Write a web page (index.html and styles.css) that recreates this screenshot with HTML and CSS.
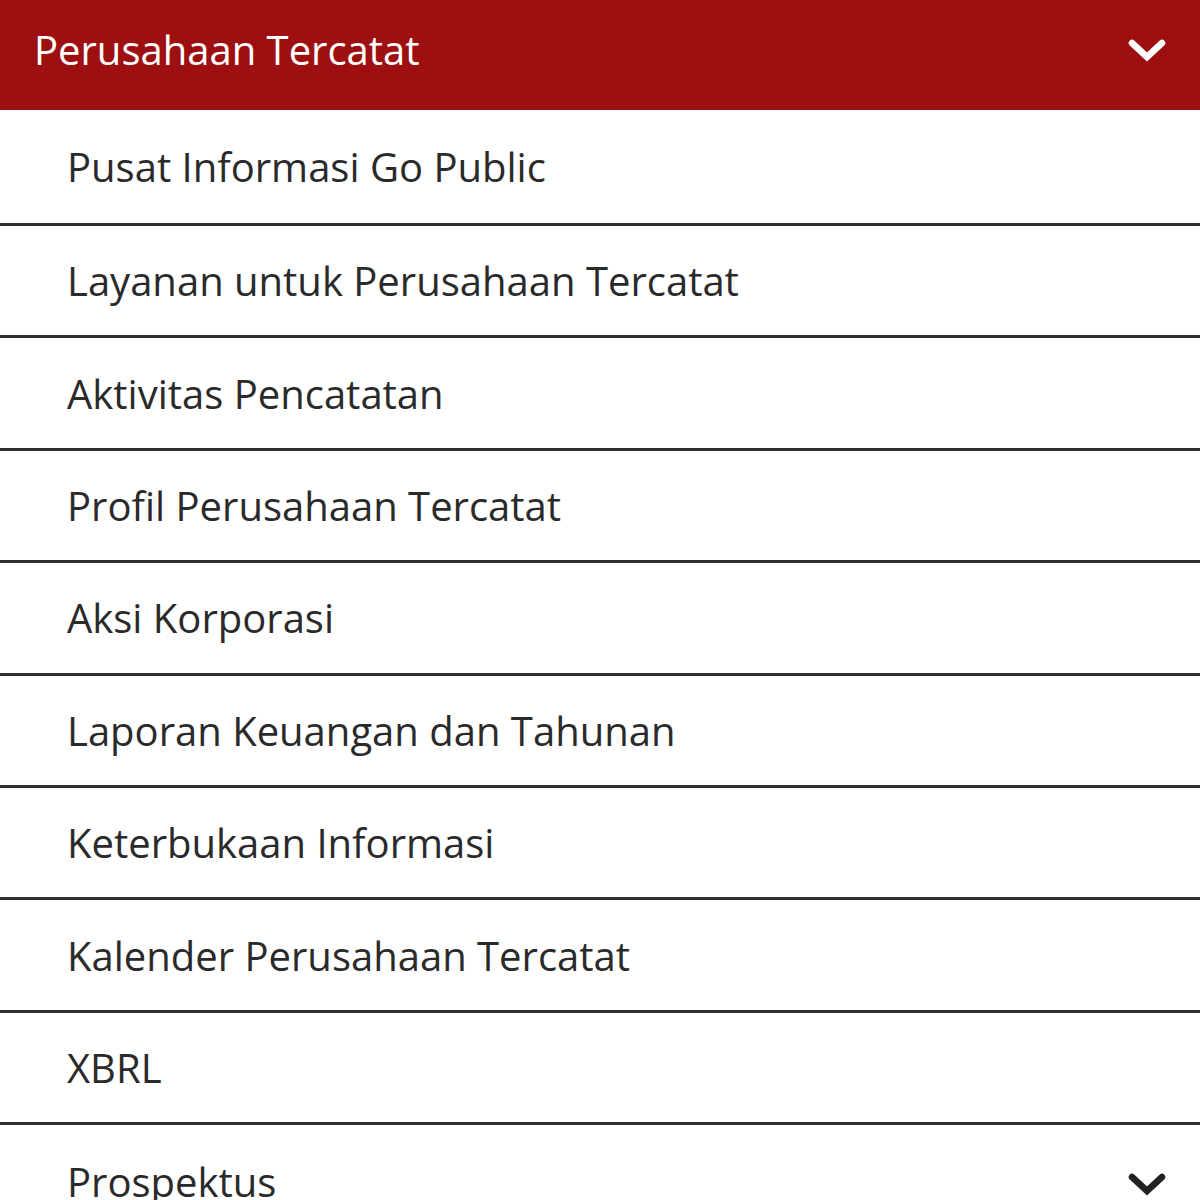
FILE: index.html
```html
<!DOCTYPE html>
<html lang="id">
<head>
    <meta charset="UTF-8">
    <meta name="viewport" content="width=device-width, initial-scale=1.0">
    <title>Perusahaan Tercatat</title>
    <link rel="stylesheet" href="styles.css">
</head>
<body>
    <div class="menu">
        <div class="menu-header">
            <span class="menu-title">Perusahaan Tercatat</span>
            <svg class="chevron" viewBox="0 0 40 26" width="40" height="26">
                <polyline points="5,5 20,19 35,5"></polyline>
            </svg>
        </div>

        <ul class="menu-list">
            <li class="menu-item">Pusat Informasi Go Public</li>
            <li class="menu-item">Layanan untuk Perusahaan Tercatat</li>
            <li class="menu-item">Aktivitas Pencatatan</li>
            <li class="menu-item">Profil Perusahaan Tercatat</li>
            <li class="menu-item">Aksi Korporasi</li>
            <li class="menu-item">Laporan Keuangan dan Tahunan</li>
            <li class="menu-item">Keterbukaan Informasi</li>
            <li class="menu-item">Kalender Perusahaan Tercatat</li>
            <li class="menu-item">XBRL</li>
            <li class="menu-item has-sub">
                <span>Prospektus</span>
                <svg class="chevron dark" viewBox="0 0 40 26" width="40" height="26">
                    <polyline points="5,5 20,19 35,5"></polyline>
                </svg>
            </li>
        </ul>
    </div>
</body>
</html>
```

FILE: styles.css
```css
body {
    margin: 0;
    background: #fff;
    font-family: 'Open Sans', 'Noto Sans', sans-serif;
    overflow: hidden;
}
.menu {
    width: 1200px;
}
.menu-header {
    height: 110px;
    background: #9e0f11;
    color: #fff;
    display: flex;
    align-items: center;
    justify-content: space-between;
    padding: 0 33px 0 34px;
    box-sizing: border-box;
}
.menu-title {
    font-size: 40px;
    margin-top: -12px;
}
.chevron {
    display: block;
    margin-top: -8px;
}
.chevron polyline {
    fill: none;
    stroke: #fff;
    stroke-width: 6.5;
    stroke-linecap: round;
    stroke-linejoin: miter;
}
.chevron.dark polyline {
    stroke: #222;
}
.menu-list {
    list-style: none;
    margin: 0;
    padding: 0;
}
.menu-item {
    height: 109.4px;
    border-bottom: 3px solid #2e2e2e;
    display: flex;
    align-items: center;
    padding: 0 33px 0 67px;
    font-size: 40px;
    color: #2a2a2a;
    box-sizing: content-box;
}
.menu-item:first-child {
    height: 113px;
}
.has-sub {
    justify-content: space-between;
    border-bottom: none;
}
.has-sub span {
    margin-top: 4px;
}
.has-sub .chevron {
    margin-top: 10px;
}
```
